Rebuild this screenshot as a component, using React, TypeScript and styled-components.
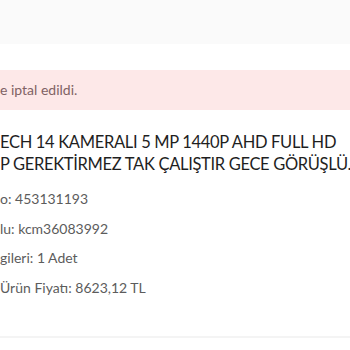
import styled, { createGlobalStyle } from 'styled-components';

const GlobalStyle = createGlobalStyle`
  html, body {
    margin: 0;
    padding: 0;
    background: #ffffff;
    overflow: hidden;
  }
  body {
    font-family: Lato, "Noto Sans", "Liberation Sans", sans-serif;
  }
`;

const Page = styled.div`
  width: 350px;
  height: 350px;
  overflow: hidden;
  display: flex;
  flex-direction: column;
`;

const TopBar = styled.div`
  height: 44px;
  background: #fafafa;
  flex-shrink: 0;
`;

const Content = styled.div`
  padding-top: 26px;
  display: flex;
  flex-direction: column;
`;

const Alert = styled.div`
  height: 40px;
  background: #fde8e8;
  color: #7f6264;
  font-size: 14px;
  line-height: 40px;
  white-space: nowrap;
`;

const Title = styled.h2`
  margin: 21px 0 0;
  font-size: 16.5px;
  font-weight: 400;
  letter-spacing: -0.32px;
  line-height: 22px;
  color: #1f1f1f;
  white-space: nowrap;
`;

const InfoList = styled.div`
  margin-top: 9px;
  padding-bottom: 34px;
  border-bottom: 2px solid #f4f4f4;
  display: flex;
  flex-direction: column;
`;

const InfoRow = styled.div`
  font-size: 14px;
  line-height: 29.5px;
  color: #5c5c5c;
  white-space: nowrap;
`;

function App() {
  return (
    <>
      <GlobalStyle />
      <Page>
        <TopBar />
        <Content>
          <Alert>e iptal edildi.</Alert>
          <Title>
            ECH 14 KAMERALI 5 MP 1440P AHD FULL HD
            <br />
            P GEREKTİRMEZ TAK ÇALIŞTIR GECE GÖRÜŞLÜ.
          </Title>
          <InfoList>
            <InfoRow>o: 453131193</InfoRow>
            <InfoRow>lu: kcm36083992</InfoRow>
            <InfoRow>gileri: 1 Adet</InfoRow>
            <InfoRow>Ürün Fiyatı: 8623,12 TL</InfoRow>
          </InfoList>
        </Content>
      </Page>
    </>
  );
}

export default App;
